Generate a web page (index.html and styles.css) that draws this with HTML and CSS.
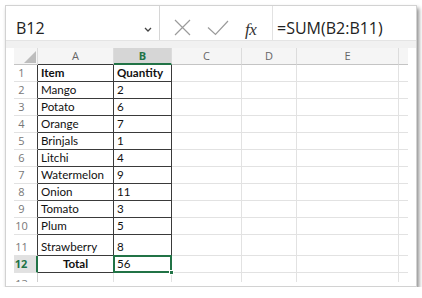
FILE: index.html
```html
<!DOCTYPE html>
<html>
<head>
<meta charset="utf-8">
<link rel="stylesheet" href="styles.css">
</head>
<body>
<div class="frame">
  <div class="toolbar">
    <div class="namebox">
      <span class="name">B12</span>
      <svg class="chev" width="8" height="5" viewBox="0 0 8 5"><path d="M1 1 L4 4 L7 1" fill="none" stroke="#444" stroke-width="1.3"/></svg>
    </div>
    <div class="icons">
      <svg class="ic-x" width="17" height="17" viewBox="0 0 17 17"><path d="M1 1 L16 16 M16 1 L1 16" stroke="#9b9b9b" stroke-width="1.2" fill="none"/></svg>
      <svg class="ic-ok" width="22" height="16" viewBox="0 0 22 16"><path d="M1 7.5 L8.5 14.5 L21 1" stroke="#9b9b9b" stroke-width="1.2" fill="none"/></svg>
      <span class="fx">fx</span>
    </div>
    <div class="formula">=SUM(B2:B11)</div>
  </div>
  <div class="strip"></div>
  <div class="sheet">
    <div class="grid">
      <div class="ch corner"><svg width="24" height="16" viewBox="0 0 24 16"><polygon points="22,3 22,15 10,15" fill="#bdbdbd"/></svg></div>
      <div class="ch ch-t">A</div>
      <div class="ch ch-t ch-sel">B</div>
      <div class="ch">C</div>
      <div class="ch">D</div>
      <div class="ch">E</div>
      <div class="ch ch-end"></div>

      <div class="rh rh-t">1</div><div class="c t b">Item</div><div class="c t b">Quantity</div><div class="c"></div><div class="c"></div><div class="c"></div><div class="c end"></div>
      <div class="rh rh-t">2</div><div class="c t">Mango</div><div class="c t">2</div><div class="c"></div><div class="c"></div><div class="c"></div><div class="c end"></div>
      <div class="rh rh-t">3</div><div class="c t">Potato</div><div class="c t">6</div><div class="c"></div><div class="c"></div><div class="c"></div><div class="c end"></div>
      <div class="rh rh-t">4</div><div class="c t">Orange</div><div class="c t">7</div><div class="c"></div><div class="c"></div><div class="c"></div><div class="c end"></div>
      <div class="rh rh-t">5</div><div class="c t">Brinjals</div><div class="c t">1</div><div class="c"></div><div class="c"></div><div class="c"></div><div class="c end"></div>
      <div class="rh rh-t">6</div><div class="c t">Litchi</div><div class="c t">4</div><div class="c"></div><div class="c"></div><div class="c"></div><div class="c end"></div>
      <div class="rh rh-t">7</div><div class="c t">Watermelon</div><div class="c t">9</div><div class="c"></div><div class="c"></div><div class="c"></div><div class="c end"></div>
      <div class="rh rh-t">8</div><div class="c t">Onion</div><div class="c t">11</div><div class="c"></div><div class="c"></div><div class="c"></div><div class="c end"></div>
      <div class="rh rh-t">9</div><div class="c t">Tomato</div><div class="c t">3</div><div class="c"></div><div class="c"></div><div class="c"></div><div class="c end"></div>
      <div class="rh rh-t">10</div><div class="c t">Plum</div><div class="c t">5</div><div class="c"></div><div class="c"></div><div class="c"></div><div class="c end"></div>
      <div class="rh rh-t">11</div><div class="c t">Strawberry</div><div class="c t">8</div><div class="c"></div><div class="c"></div><div class="c"></div><div class="c end"></div>
      <div class="rh rh-sel">12</div><div class="c t b center">Total</div><div class="c t sel">56</div><div class="c"></div><div class="c"></div><div class="c"></div><div class="c end"></div>
      <div class="rh rh-13">13</div><div class="c"></div><div class="c"></div><div class="c"></div><div class="c"></div><div class="c"></div><div class="c end"></div>
    </div>
  </div>
</div>
</body>
</html>
```
FILE: styles.css
```css
html, body {
  margin: 0;
  padding: 0;
  background: #ffffff;
}
.frame {
  margin: 5px 0 0 5px;
  width: 410px;
  height: 280px;
  border: 1px solid #d2d2d2;
  background: #ffffff;
  box-shadow: 2px 3px 4px rgba(0, 0, 0, 0.45);
  display: flex;
  flex-direction: column;
  overflow: hidden;
}
.toolbar {
  height: 34px;
  display: flex;
  flex: none;
}
.namebox {
  width: 154px;
  border-right: 1px solid #d6d6d6;
  box-sizing: border-box;
  display: flex;
  align-items: flex-start;
  justify-content: space-between;
  padding: 11px 7px 0 10px;
}
.name {
  font-family: "Open Sans", sans-serif;
  font-size: 16px;
  line-height: 22px;
  color: #222;
}
.chev {
  margin-top: 10px;
}
.icons {
  width: 112px;
  display: flex;
  align-items: flex-start;
  padding-top: 13px;
  box-sizing: border-box;
}
.ic-x {
  margin-left: 14px;
}
.ic-ok {
  margin-left: 16px;
  margin-top: 1px;
}
.fx {
  font-family: "Liberation Serif", serif;
  font-style: italic;
  font-size: 17px;
  line-height: 17px;
  color: #333;
  margin-left: 16px;
  margin-top: 2px;
  letter-spacing: -0.5px;
}
.formula {
  flex: 1;
  margin-right: 6px;
  border-left: 1px solid #e2e2e2;
  font-family: "Open Sans", sans-serif;
  font-size: 16px;
  line-height: 22px;
  color: #222;
  padding: 11px 0 0 4px;
  box-sizing: border-box;
}
.strip {
  height: 8px;
  flex: none;
  background: #f1f1f1;
  border-top: 1px solid #e4e4e4;
  box-sizing: border-box;
}
.sheet {
  height: 234px;
  margin-left: 8px;
  width: 394px;
  overflow: hidden;
  flex: none;
}
.grid {
  display: grid;
  grid-template-columns: 24px 76px 58px 70px 55px 102px 9px;
  grid-template-rows: repeat(11, 17px) 21px 17px 17px;
}
.grid > div {
  box-sizing: border-box;
  position: relative;
}
.ch {
  background: #f5f5f5;
  border-right: 1px solid #dcdcdc;
  border-bottom: 1px solid #c4c4c4;
  font-family: "Open Sans", sans-serif;
  font-size: 11px;
  line-height: 16px;
  color: #666;
  text-align: center;
}
.corner svg {
  display: block;
}
.ch-end {
  border-right: none;
}
.ch-t {
  border-bottom-color: #3a3a3a;
}
.ch-sel {
  background: #d6d6d6;
  color: #217346;
  font-weight: bold;
  border-bottom: 2px solid #217346;
}
.rh {
  border-right: 1px solid #cfcfcf;
  border-bottom: 1px solid #e2e2e2;
  font-family: "Open Sans", sans-serif;
  font-size: 11px;
  color: #777;
  display: flex;
  align-items: flex-end;
  justify-content: center;
  padding: 0 8px 1px 0;
  line-height: 15px;
}
.rh-13 {
  align-items: flex-start;
  padding-top: 3px;
}
.rh-t {
  border-right-color: #3a3a3a;
}
.rh-sel {
  background: #e1e1e1;
  color: #217346;
  font-weight: bold;
  border-right: 2px solid #217346;
}
.c {
  border-right: 1px solid #e2e2e2;
  border-bottom: 1px solid #e2e2e2;
  font-family: Lato, "Liberation Sans", sans-serif;
  font-size: 11.6px;
  line-height: 15px;
  color: #111;
  display: flex;
  align-items: flex-end;
  padding: 0 0 1px 3px;
  white-space: nowrap;
}
.end {
  border-right: none;
}
.t {
  border-right-color: #3a3a3a;
  border-bottom-color: #3a3a3a;
}
.b {
  font-weight: bold;
}
.center {
  justify-content: center;
  padding-left: 0;
}
.sel::after {
  content: "";
  position: absolute;
  left: -1px;
  top: -1px;
  right: -1px;
  bottom: -1px;
  border: 2px solid #217346;
}
.sel::before {
  content: "";
  position: absolute;
  right: -3px;
  bottom: -3px;
  width: 5px;
  height: 5px;
  background: #217346;
  border: 1px solid #fff;
  box-sizing: border-box;
  z-index: 2;
}
```
